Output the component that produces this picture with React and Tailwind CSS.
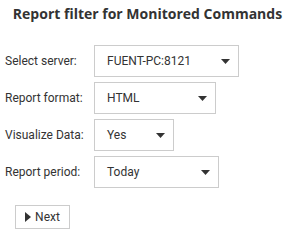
import React from 'react';

const Caret = () => (
  <svg width="9" height="5" viewBox="0 0 9 5" className="shrink-0">
    <path d="M0 0h9L4.5 5z" fill="#333" />
  </svg>
);

const fields = [
  { label: 'Select server:', value: 'FUENT-PC:8121', width: 'w-[145px]' },
  { label: 'Report format:', value: 'HTML', width: 'w-[122px]' },
  { label: 'Visualize Data:', value: 'Yes', width: 'w-[80px]' },
  { label: 'Report period:', value: 'Today', width: 'w-[125px]' },
];

export default function App() {
  return (
    <div className="w-[295px] h-[240px] bg-white text-[#333] font-['Roboto',sans-serif]">
      <h1 className="pt-[4px] text-center text-[14px] leading-[20px] font-bold font-['Open_Sans',sans-serif]">
        Report filter for Monitored Commands
      </h1>

      {/* filter form */}
      <div className="mt-[21px] flex flex-col gap-[5px]">
        {fields.map((f) => (
          <div key={f.label} className="flex items-center">
            <span className="w-[94px] pl-[5px] text-[12px]">{f.label}</span>
            <div
              className={`${f.width} h-[32px] flex items-center justify-between pl-[12px] pr-[8px] border border-[#ccc] text-[12px]`}
            >
              <span>{f.value}</span>
              <Caret />
            </div>
          </div>
        ))}
      </div>

      <div className="mt-[17px] pl-[15px]">
        <button className="h-[24px] w-[55px] flex items-center justify-center gap-[4px] border border-[#ccc] bg-white text-[12px]">
          <svg width="6" height="10" viewBox="0 0 6 10">
            <path d="M0 0l6 5-6 5z" fill="#333" />
          </svg>
          Next
        </button>
      </div>
    </div>
  );
}
